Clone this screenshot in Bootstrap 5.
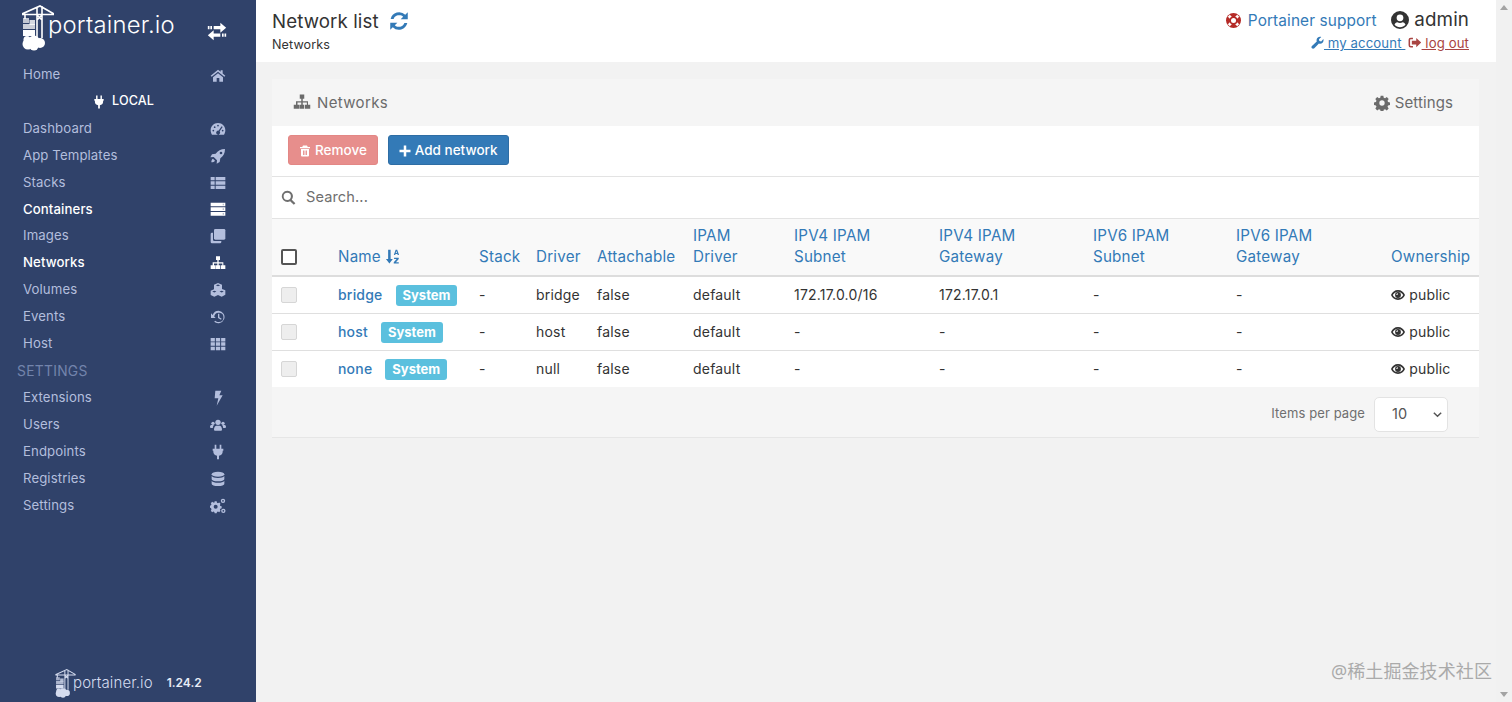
<!DOCTYPE html>
<html lang="en">
<head>
<meta charset="utf-8">
<title>Network list</title>
<link href="https://cdn.jsdelivr.net/npm/bootstrap@5.3.0/dist/css/bootstrap.min.css" rel="stylesheet">
<style>
html,body{height:702px;overflow:hidden}
body{font-family:Inter,"Noto Sans",sans-serif;font-size:13.5px;background:#f2f2f2;color:#333;letter-spacing:.1px}
.ic{width:1em;height:1em;fill:currentColor;flex:none;display:inline-block;vertical-align:-.12em}
.shell{height:702px}
.side{width:256px;flex:none;background:#30426a;color:#b3bedd}
.brandbar{height:61.4px;flex:none;padding:5px 29px 0 22px;color:#fff}
.brandlogo{width:32px;height:46px;flex:none}
.brandtext{font-size:23.8px;font-weight:300;letter-spacing:.2px;margin-left:-6px;margin-top:8px;line-height:24px}
.swap{font-size:20px;margin-top:16px}
.sitem{height:26.93px;flex:none;padding:0 30px 0 23px;font-size:13.2px;font-weight:400}
.sitem .ic{font-size:16px}
.sitem.on{color:#fff;font-weight:500}
.sitem.env{color:#fff;justify-content:center;padding:0 10px 0 0;gap:6px;font-size:12.6px;font-weight:500}
.sitem.env .ic{font-size:14px}
.shead{height:26.93px;flex:none;padding-left:17px;color:#7384ac;font-size:13.8px;letter-spacing:.3px}
.sfoot{height:38px;padding:0 0 0 55px;color:#d5dcef;margin-top:auto}
.sfoot .brandlogo{width:21px;height:29px}
.sfoot .ptxt{font-size:15px;font-weight:300;margin-left:-3px;margin-right:14px}
.sfoot .ver{font-size:12px;font-weight:600;color:#e8ecf6;letter-spacing:0}
.mainpane{width:1240px;flex:none;min-width:0}
.topbar{height:62px;background:#fff;padding:11px 27px 0 16px}
.ttl{font-size:18.7px;line-height:22px;color:#333;font-weight:400}
.ttl .ic{color:#337ab7;font-size:20px;margin-left:5px;vertical-align:-.16em}
.crumb{font-size:12.6px;line-height:18px;margin-top:3px;color:#333}
.whobox{margin-top:-2px}
.who{font-size:15.4px;line-height:22px;color:#337ab7}
.who .ic.ring{font-size:15px;margin-right:2px}
.who .uname{color:#333;font-size:18.8px;margin-left:10px}
.who .uname .ic{font-size:18px;vertical-align:-.14em}
.acct{font-size:13.2px;line-height:18px;margin-top:2px}
.acct a{color:#337ab7}
.acct a.out{color:#a94442;margin-left:3px}
.boxx{margin:17px 17px 0 16px;background:#fff;border-bottom:1px solid #e6e6e6}
.boxhead{height:47px;background:#f5f5f5;padding:2px 26px 0 21px;color:#6b6b6b;font-size:15px}
.boxhead .ic{font-size:16px;vertical-align:-.15em}
.boxhead .ic.big{font-size:18px}
.boxhead .lbl{letter-spacing:.35px;margin-left:2px}
.tools{height:51px;padding:9px 16px 0;border-bottom:1px solid #e3e3e3;gap:10px}
.tools .btn{height:30px;font-size:13.5px;line-height:1;padding:1px 10px 0;border-radius:3px;display:inline-flex;align-items:center;gap:4px;font-weight:500}
.tools .btn .ic{font-size:12px}
.btn-off{background:#e78e8c;color:#fff;border:1px solid #e38785;opacity:1}
.btn-add{background:#337ab7;color:#fff;border:1px solid #2e6da4}
.srch{height:41px;padding:0 9px;color:#6f6f6f;font-size:14.6px;gap:10px}
.srch .ic{font-size:15px}
.nettbl{table-layout:fixed;width:1207px;margin:0;font-size:14px;letter-spacing:.2px;--bs-table-bg:transparent}
.nettbl>:not(caption)>*>*{padding:8px;line-height:20px;border-color:#dfdfdf;color:#333}
.nettbl thead{background:#f9f9f9;border-top:1px solid #e3e3e3}
.nettbl>thead>tr>th{font-size:15.2px;line-height:21px;font-weight:400;color:#337ab7;vertical-align:bottom;border-bottom:2px solid #ddd;white-space:nowrap;padding:6px 8px 8px}
.nettbl th .ic{font-size:15px}
.nettbl td{white-space:nowrap}
.nettbl td a{color:#337ab7;text-decoration:none;font-weight:500}
.sysbadge{background:#5bc0de;color:#fff;border-radius:3px;font-size:13px;font-weight:700;padding:0 7px;display:inline-block;line-height:21px;margin:-1px 0 -1px 13px;letter-spacing:0}
.cb{width:16px;height:16px;margin-left:1px;border:2px solid #555;border-radius:2px;background:#fff;display:block;margin-bottom:2px}
.cb.off{border:1px solid #d6d6d6;background:#eee;margin-bottom:0;margin-top:2px}
.tfoot{height:50px;background:#f5f5f5;padding:4px 31px 0 0;gap:9px;font-size:13px;color:#6f6f6f}
.pp{width:74px;height:35px;border:1px solid #e3e3e3;border-radius:5px;background:#fff;color:#555;font-size:14.5px;padding:0 4px 0 17px}
.pp svg{width:11px;height:11px;stroke:#555;fill:none;stroke-width:1.6}
.sbar{width:16px;flex:none;background:#f1f1f1;padding:5px 0;color:#a3a3a3}
.tri-u,.tri-d{width:0;height:0;border-left:4.5px solid transparent;border-right:4.5px solid transparent}
.tri-u{border-bottom:5px solid #a3a3a3}
.tri-d{border-top:5px solid #a3a3a3}
.wmark{position:absolute;right:20px;bottom:18px;font-family:"Noto Sans","Noto Sans CJK SC",sans-serif;font-size:18px;line-height:26px;color:#aaa;letter-spacing:.1px}
</style>
</head>
<body>
<svg width="0" height="0" class="position-absolute">
<defs>
<symbol id="logo" viewBox="0 0 32 46">
  <g stroke="currentColor" fill="none" stroke-width="1.6"><path d="M0 9 18 1l14 8M0 9.500h32M15 3v30M20 1v32M15 10l5 5M20 10l-5 5"/><path d="M3 9.500V14"/></g>
  <g fill="currentColor"><rect x="1" y="13" width="6" height="5" opacity=".7"/><rect x="7.500" y="15" width="5.500" height="5" opacity=".8"/><rect x="1" y="19" width="12" height="5" opacity=".75"/><rect x="1" y="25" width="12" height="6"/>
  <circle cx="6" cy="39" r="5.500"/><circle cx="12" cy="36" r="5.500"/><circle cx="18" cy="38" r="5"/><circle cx="12" cy="41" r="4.500"/><circle cx="5" cy="34.500" r="3.500"/></g>
</symbol>
<symbol id="i-home" viewBox="0 0 24 24"><path d="M12 4 1 13l1.500 1.800L12 7l9.500 7.800L23 13l-4-3.300V5h-3v2.200zM4.500 15.500V22h5.500v-5.500h4V22h5.500v-6.500L12 9.500z"/></symbol>
<symbol id="i-swap" viewBox="0 0 24 24"><path d="M16 2l7 6-7 6v-4H8V6h8zM4 6h2v4H4zM1 6h2v4H1zM8 11v4h8v4H8v4l-7-6zM18 15h2v4h-2zM21 15h2v4h-2z"/></symbol>
<symbol id="i-plug" viewBox="0 0 24 24"><path d="M7 1h2.500v6h5V1H17v6h3v3h-1v2c0 3-2.500 5-5.500 5.500V23h-3v-5.500C7.500 17 5 15 5 12v-2H4V7h3z"/></symbol>
<symbol id="i-gauge" viewBox="0 0 24 24"><path fill-rule="evenodd" d="M12 3C5.500 3 1 8 1 14c0 2.500.8 4.800 2 6.500h18c1.200-1.700 2-4 2-6.500 0-6-4.500-11-11-11zM12 5.500a1.300 1.300 0 1 1 0 2.600 1.300 1.300 0 0 1 0-2.600zM5 13a1.300 1.300 0 1 1 0 2.600A1.300 1.300 0 0 1 5 13zm2-5a1.300 1.300 0 1 1 0 2.600A1.300 1.300 0 0 1 7 8zm12 5a1.300 1.300 0 1 1 0 2.600 1.300 1.300 0 0 1 0-2.600zm-1.500-5 1.500 1-4.500 6.500a3 3 0 1 1-1.700-1z"/></symbol>
<symbol id="i-rocket" viewBox="0 0 24 24"><path fill-rule="evenodd" d="M22.500 1.500C16 1.500 12 4 8.500 8.500L3 9.500 0.500 14l5-.5 5 5L10 23.500l4.500-2.500 1-5.500C20 12 22.500 8 22.500 1.500zM16.500 5.500a2 2 0 1 1 0 4 2 2 0 0 1 0-4zM4.500 16c-2 1-2.500 3-2.500 5.500 2.500 0 4.500-.5 5.500-2.500z"/></symbol>
<symbol id="i-list" viewBox="0 0 24 24"><path d="M1 3h6v5H1zM8.500 3H23v5H8.500zM1 9.500h6v5H1zM8.500 9.500H23v5H8.500zM1 16h6v5H1zM8.500 16H23v5H8.500z"/></symbol>
<symbol id="i-server" viewBox="0 0 24 24"><path d="M1 2.500h22v5.500H1zM1 9.500h22V15H1zM1 16.500h22V22H1z"/><path fill="#30426a" opacity=".35" d="M19 4h2v2.500h-2zM19 11h2v2.500h-2zM19 18h2v2.500h-2z"/></symbol>
<symbol id="i-clone" viewBox="0 0 24 24"><path d="M8 1.500h13a2 2 0 0 1 2 2v12a2 2 0 0 1-2 2H8a2 2 0 0 1-2-2v-12a2 2 0 0 1 2-2z"/><path d="M4.500 7v10.500A2 2 0 0 0 6.500 19.500H17V21a2 2 0 0 1-2 2H3a2 2 0 0 1-2-2V9a2 2 0 0 1 2-2z"/></symbol>
<symbol id="i-site" viewBox="0 0 24 24"><path d="M9 2h6v5.500h-2V11h7v4.500h3V21h-7v-5.500h2.500V12.700h-5.500v2.800H15V21H9v-5.500h2V12.700H6v2.800h2.500V21H1v-5.500h3V11h7V7.500H9z"/></symbol>
<symbol id="i-cubes" viewBox="0 0 24 24"><path fill-rule="evenodd" d="M12 1.500l6 2.500v6.500l5 2v6.500l-5.500 3-5.500-2.500-5.500 2.500L1 19.500V13l5-2V4zM12 3.700 8.800 5 12 6.300 15.200 5zM6.500 13 3.300 14.300 6.500 15.600 9.700 14.300zm11 0-3.200 1.300 3.200 1.300 3.200-1.300z"/></symbol>
<symbol id="i-hist" viewBox="0 0 24 24"><path d="M13 2.500A9.500 9.500 0 0 0 4 9L1.500 6.500V13.500h7L6.300 11.200A7 7 0 1 1 13 19.500c-2 0-3.800-.8-5-2l-1.800 1.800A9.500 9.500 0 1 0 13 2.500z"/><path d="M12 7h2v5.500l3.500 2-1 1.700L12 13.500z"/></symbol>
<symbol id="i-th" viewBox="0 0 24 24"><path d="M1 3h6.300v5.300H1zM8.800 3h6.400v5.300H8.800zM16.700 3H23v5.300h-6.300zM1 9.500h6.300v5.300H1zM8.800 9.500h6.400v5.300H8.800zM16.700 9.500H23v5.300h-6.300zM1 16h6.300v5.300H1zM8.800 16h6.400v5.300H8.800zM16.700 16H23v5.300h-6.300z"/></symbol>
<symbol id="i-bolt" viewBox="0 0 24 24"><path d="M8 1h9l-3 7h5L10 23.500l2.500-11H7z"/></symbol>
<symbol id="i-users" viewBox="0 0 24 24"><circle cx="12" cy="8" r="4"/><circle cx="4.500" cy="9.500" r="2.500"/><circle cx="19.500" cy="9.500" r="2.500"/><path d="M6 19c0-4 2-6 3.500-6h5C16 13 18 15 18 19c0 1-1 1.500-2 1.500H8c-1 0-2-.5-2-1.500zM0 15c0-2 1-3 2.500-3H6c-1 1-1.700 2.500-1.700 4.500H1.500C.5 16.500 0 16 0 15zM24 15c0-2-1-3-2.500-3H18c1 1 1.700 2.500 1.700 4.500h2.800c1 0 1.500-.5 1.500-1.500z"/></symbol>
<symbol id="i-db" viewBox="0 0 24 24"><ellipse cx="12" cy="5" rx="9.500" ry="3.700"/><path d="M2.500 7.500c1 2 5 3 9.500 3s8.500-1 9.500-3v4.500c0 2-4 3.500-9.500 3.500S2.500 14 2.500 12zM2.500 14.500c1 2 5 3 9.500 3s8.500-1 9.500-3V19c0 2-4 3.500-9.500 3.500S2.500 21 2.500 19z"/></symbol>
<symbol id="i-cogs" viewBox="0 0 24 24"><path fill-rule="evenodd" d="M7 5h3l.5 2 1.500.7 1.800-1 2 2-1 1.800.7 1.500 2 .5v3l-2 .5-.7 1.500 1 1.800-2 2-1.800-1-1.500.7-.5 2H7l-.5-2-1.500-.7-1.800 1-2-2 1-1.800L1.500 15l-1.500-.5v-3l1.500-.5.7-1.500-1-1.800 2-2 1.800 1L6.500 7zM8.500 10a3 3 0 1 0 0 6 3 3 0 0 0 0-6z"/><path fill-rule="evenodd" d="M19.500 1a3.300 3.300 0 1 1 0 6.600 3.300 3.300 0 0 1 0-6.600zm0 2a1.300 1.300 0 1 0 0 2.600 1.300 1.300 0 0 0 0-2.600zM20 16a3.300 3.300 0 1 1 0 6.600 3.300 3.300 0 0 1 0-6.600zm0 2a1.300 1.300 0 1 0 0 2.600 1.300 1.300 0 0 0 0-2.600z"/></symbol>
<symbol id="i-sync" viewBox="0 0 24 24"><path d="M22.500 1.500v8.500H14l3-3A7 7 0 0 0 5.500 9.500H2A10.500 10.500 0 0 1 19.500 4.500zM1.500 22.500V14H10l-3 3a7 7 0 0 0 11.500-2.500H22A10.500 10.500 0 0 1 4.500 19.500z"/></symbol>
<symbol id="i-trash" viewBox="0 0 24 24"><path fill-rule="evenodd" d="M8 1h8l1.500 3H22v2.500H2V4h4.500zM4 8h16v13a2 2 0 0 1-2 2H6a2 2 0 0 1-2-2zm4 3v9h1.800v-9zm3.100 0v9h1.800v-9zm3.100 0v9H16v-9z"/></symbol>
<symbol id="i-plus" viewBox="0 0 24 24"><path d="M9.500 1h5v8.500H23v5h-8.500V23h-5v-8.500H1v-5h8.500z"/></symbol>
<symbol id="i-search" viewBox="0 0 24 24"><path fill-rule="evenodd" d="M10 1a9 9 0 0 1 7.200 14.400l5.800 5.800-2.500 2.500-5.900-5.800A9 9 0 1 1 10 1zm0 3.200a5.800 5.800 0 1 0 0 11.600 5.800 5.800 0 0 0 0-11.600z"/></symbol>
<symbol id="i-ring" viewBox="0 0 24 24"><circle cx="12" cy="12" r="12" fill="#b52b27"/><path d="M4.500 4.500l15 15M19.500 4.500l-15 15" stroke="#fff" stroke-width="4.500"/><circle cx="12" cy="12" r="6.500" fill="#b52b27"/><circle cx="12" cy="12" r="4" fill="#fff"/></symbol>
<symbol id="i-user" viewBox="0 0 24 24"><path fill-rule="evenodd" d="M12 0a12 12 0 1 1 0 24 12 12 0 0 1 0-24zm0 4.500a4.500 4.500 0 1 0 0 9 4.500 4.500 0 0 0 0-9zM12 21.500c3 0 5.500-1.300 7.300-3.300-.6-2-2-3.200-3.800-3.200-1 .7-2.200 1-3.500 1s-2.500-.3-3.500-1c-1.800 0-3.200 1.200-3.800 3.200 1.800 2 4.300 3.300 7.300 3.300z"/></symbol>
<symbol id="i-wrench" viewBox="0 0 24 24"><path d="M22.500 5.500c.8 2.500.2 5-1.500 6.700-1.800 1.800-4.300 2.300-6.600 1.500L6 22.500c-1.200 1.200-3 1.200-4.300 0-1.200-1.300-1.200-3.100 0-4.300l8.800-8.400C9.700 7.500 10.200 5 12 3.200 13.700 1.500 16.200.9 18.700 1.700l-4.200 4.100.7 3.300 3.300.7z"/></symbol>
<symbol id="i-out" viewBox="0 0 24 24"><path d="M9 3H5a4 4 0 0 0-4 4v10a4 4 0 0 0 4 4h4v-2.800H5A1.300 1.300 0 0 1 3.800 17V7A1.300 1.300 0 0 1 5 5.800h4z"/><path d="M15 3.500 24 12l-9 8.500V15.500H7v-7h8z"/></symbol>
<symbol id="i-eye" viewBox="0 0 24 24"><path fill-rule="evenodd" d="M12 3.500c5.700 0 10 3.500 12 8.500-2 5-6.300 8.500-12 8.500S2 17 0 12C2 7 6.300 3.500 12 3.500zM12 6.300C8.300 6.300 5 8.500 3.100 12c1.900 3.500 5.200 5.700 8.900 5.700s7-2.200 8.900-5.700C19 8.500 15.700 6.300 12 6.300zM12 7a5 5 0 1 1 0 10 5 5 0 0 1 0-10zm0 2a3 3 0 0 0-3 3h1.800A1.200 1.200 0 0 1 12 10.800z"/></symbol>
<symbol id="i-sort" viewBox="0 0 24 24"><path d="M5 1h4v15h3.500L7 23l-5.500-7H5zM17 1h2.500l3 8.500h-2.200l-.5-1.600h-3l-.5 1.600h-2.200zm1.200 2.300-1 3h2zM14.500 14H22v1.800L17.500 21H22v2h-8v-1.800L18.500 16h-4z"/></symbol>
<symbol id="i-cog" viewBox="0 0 24 24"><path fill-rule="evenodd" d="M10 1h4l.6 3 2 .8 2.600-1.700 2.800 2.800-1.700 2.600.8 2 3 .6v4l-3 .6-.8 2 1.700 2.600-2.800 2.800-2.600-1.700-2 .8-.6 3h-4l-.6-3-2-.8-2.600 1.700-2.800-2.800 1.700-2.600-.8-2-3-.6v-4l3-.6.8-2L2 5.900l2.800-2.800 2.600 1.700 2-.8zM12 8a4 4 0 1 0 0 8 4 4 0 0 0 0-8z"/></symbol>
</defs>
</svg>

<div class="shell d-flex">
  <aside class="side d-flex flex-column">
    <div class="brandbar d-flex align-items-start justify-content-between">
      <div class="d-flex align-items-start">
        <svg class="brandlogo"><use href="#logo"/></svg>
        <span class="brandtext">portainer.io</span>
      </div>
      <svg class="ic swap"><use href="#i-swap"/></svg>
    </div>
    <div class="sitem d-flex align-items-center justify-content-between">Home<svg class="ic"><use href="#i-home"/></svg></div>
    <div class="sitem env d-flex align-items-center"><svg class="ic"><use href="#i-plug"/></svg>LOCAL</div>
    <div class="sitem d-flex align-items-center justify-content-between">Dashboard<svg class="ic"><use href="#i-gauge"/></svg></div>
    <div class="sitem d-flex align-items-center justify-content-between">App Templates<svg class="ic"><use href="#i-rocket"/></svg></div>
    <div class="sitem d-flex align-items-center justify-content-between">Stacks<svg class="ic"><use href="#i-list"/></svg></div>
    <div class="sitem on d-flex align-items-center justify-content-between">Containers<svg class="ic"><use href="#i-server"/></svg></div>
    <div class="sitem d-flex align-items-center justify-content-between">Images<svg class="ic"><use href="#i-clone"/></svg></div>
    <div class="sitem on d-flex align-items-center justify-content-between">Networks<svg class="ic"><use href="#i-site"/></svg></div>
    <div class="sitem d-flex align-items-center justify-content-between">Volumes<svg class="ic"><use href="#i-cubes"/></svg></div>
    <div class="sitem d-flex align-items-center justify-content-between">Events<svg class="ic"><use href="#i-hist"/></svg></div>
    <div class="sitem d-flex align-items-center justify-content-between">Host<svg class="ic"><use href="#i-th"/></svg></div>
    <div class="shead d-flex align-items-center">SETTINGS</div>
    <div class="sitem d-flex align-items-center justify-content-between">Extensions<svg class="ic"><use href="#i-bolt"/></svg></div>
    <div class="sitem d-flex align-items-center justify-content-between">Users<svg class="ic"><use href="#i-users"/></svg></div>
    <div class="sitem d-flex align-items-center justify-content-between">Endpoints<svg class="ic"><use href="#i-plug"/></svg></div>
    <div class="sitem d-flex align-items-center justify-content-between">Registries<svg class="ic"><use href="#i-db"/></svg></div>
    <div class="sitem d-flex align-items-center justify-content-between">Settings<svg class="ic"><use href="#i-cogs"/></svg></div>
    <div class="sfoot d-flex align-items-center">
      <svg class="brandlogo"><use href="#logo"/></svg>
      <span class="ptxt">portainer.io</span>
      <span class="ver">1.24.2</span>
    </div>
  </aside>

  <main class="mainpane">
    <header class="topbar d-flex justify-content-between">
      <div>
        <div class="ttl">Network list <svg class="ic"><use href="#i-sync"/></svg></div>
        <div class="crumb">Networks</div>
      </div>
      <div class="text-end whobox">
        <div class="who"><svg class="ic ring"><use href="#i-ring"/></svg> Portainer support <span class="uname"><svg class="ic"><use href="#i-user"/></svg> admin</span></div>
        <div class="acct"><a href="#"><svg class="ic"><use href="#i-wrench"/></svg> my account </a> <a href="#" class="out"><svg class="ic"><use href="#i-out"/></svg> log out</a></div>
      </div>
    </header>

    <section class="boxx">
      <div class="boxhead d-flex align-items-center justify-content-between">
        <span><svg class="ic big me-1"><use href="#i-site"/></svg><span class="lbl">Networks</span></span>
        <span><svg class="ic"><use href="#i-cog"/></svg> Settings</span>
      </div>
      <div class="tools d-flex">
        <button class="btn btn-off"><svg class="ic"><use href="#i-trash"/></svg>Remove</button>
        <button class="btn btn-add"><svg class="ic"><use href="#i-plus"/></svg>Add network</button>
      </div>
      <div class="srch d-flex align-items-center"><svg class="ic"><use href="#i-search"/></svg>Search...</div>
      <table class="table nettbl">
        <colgroup><col style="width:58px"><col style="width:141px"><col style="width:57px"><col style="width:61px"><col style="width:96px"><col style="width:101px"><col style="width:145px"><col style="width:154px"><col style="width:143px"><col style="width:155px"><col style="width:96px"></colgroup>
        <thead>
          <tr>
            <th><span class="cb"></span></th>
            <th>Name <svg class="ic"><use href="#i-sort"/></svg></th>
            <th>Stack</th><th>Driver</th><th>Attachable</th>
            <th>IPAM<br>Driver</th><th>IPV4 IPAM<br>Subnet</th><th>IPV4 IPAM<br>Gateway</th><th>IPV6 IPAM<br>Subnet</th><th>IPV6 IPAM<br>Gateway</th><th>Ownership</th>
          </tr>
        </thead>
        <tbody>
          <tr><td><span class="cb off"></span></td><td><a href="#">bridge</a><span class="sysbadge">System</span></td><td>-</td><td>bridge</td><td>false</td><td>default</td><td>172.17.0.0/16</td><td>172.17.0.1</td><td>-</td><td>-</td><td><svg class="ic"><use href="#i-eye"/></svg> public</td></tr>
          <tr><td><span class="cb off"></span></td><td><a href="#">host</a><span class="sysbadge">System</span></td><td>-</td><td>host</td><td>false</td><td>default</td><td>-</td><td>-</td><td>-</td><td>-</td><td><svg class="ic"><use href="#i-eye"/></svg> public</td></tr>
          <tr><td class="border-0"><span class="cb off"></span></td><td class="border-0"><a href="#">none</a><span class="sysbadge">System</span></td><td class="border-0">-</td><td class="border-0">null</td><td class="border-0">false</td><td class="border-0">default</td><td class="border-0">-</td><td class="border-0">-</td><td class="border-0">-</td><td class="border-0">-</td><td class="border-0"><svg class="ic"><use href="#i-eye"/></svg> public</td></tr>
        </tbody>
      </table>
      <div class="tfoot d-flex align-items-center justify-content-end">
        Items per page
        <div class="pp d-flex align-items-center justify-content-between">10<svg viewBox="0 0 12 12"><path d="M2 4l4 4 4-4"/></svg></div>
      </div>
    </section>
  </main>

  <div class="sbar d-flex flex-column justify-content-between align-items-center"><span class="tri-u"></span><span class="tri-d"></span></div>
</div>
<div class="wmark">@稀土掘金技术社区</div>
<script src="https://cdn.jsdelivr.net/npm/bootstrap@5.3.0/dist/js/bootstrap.bundle.min.js"></script>
</body>
</html>
